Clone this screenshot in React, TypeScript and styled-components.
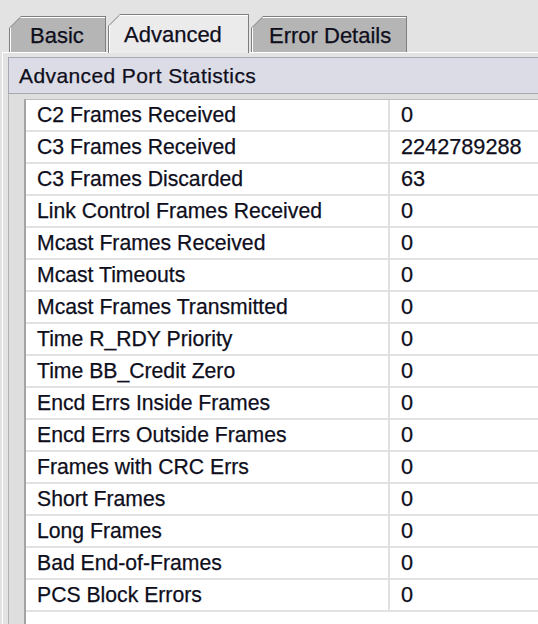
import styled, { createGlobalStyle } from 'styled-components';

const GlobalStyle = createGlobalStyle`
  body {
    margin: 0;
    background: #e3e3e3;
    font-family: "Liberation Sans", Arial, sans-serif;
  }
`;

const rows: [string, string][] = [
  ['C2 Frames Received', '0'],
  ['C3 Frames Received', '2242789288'],
  ['C3 Frames Discarded', '63'],
  ['Link Control Frames Received', '0'],
  ['Mcast Frames Received', '0'],
  ['Mcast Timeouts', '0'],
  ['Mcast Frames Transmitted', '0'],
  ['Time R_RDY Priority', '0'],
  ['Time BB_Credit Zero', '0'],
  ['Encd Errs Inside Frames', '0'],
  ['Encd Errs Outside Frames', '0'],
  ['Frames with CRC Errs', '0'],
  ['Short Frames', '0'],
  ['Long Frames', '0'],
  ['Bad End-of-Frames', '0'],
  ['PCS Block Errors', '0'],
];

const tabs = [
  { label: 'Basic', width: 97, pad: 21 },
  { label: 'Advanced', width: 141, pad: 16 },
  { label: 'Error Details', width: 156, pad: 18 },
];

const Screen = styled.div`
  width: 538px;
  height: 624px;
  overflow: hidden;
  display: flex;
  flex-direction: column;
  background: #e3e3e3;
  color: #0e0e1c;
  font-size: 21px;
  -webkit-text-stroke: 0.25px #0e0e1c;
`;

const TabStrip = styled.div`
  display: flex;
  align-items: flex-end;
  gap: 2px;
  height: 52px;
  padding-left: 9px;
  box-sizing: border-box;
  position: relative;
  z-index: 1;
`;

const Tab = styled.div<{ $active: boolean; $width: number }>`
  width: ${p => p.$width}px;
  height: ${p => (p.$active ? 39 : 36)}px;
  margin-bottom: ${p => (p.$active ? -1 : 0)}px;
  padding: 1px 1px 0 1px;
  box-sizing: border-box;
  background: #7e7e7e;
  clip-path: polygon(0 12px, 12px 0, 100% 0, 100% 100%, 0 100%);
`;

const TabFace = styled.div<{ $active: boolean; $pad: number }>`
  height: 100%;
  box-sizing: border-box;
  padding-left: ${p => p.$pad - 2}px;
  padding-top: ${p => (p.$active ? 5 : 4)}px;
  background: ${p => (p.$active ? '#ebebeb' : '#b5b5b5')};
  border-top: 1px solid #ffffff;
  border-left: 1px solid #ffffff;
  clip-path: polygon(0 11px, 11px 0, 100% 0, 100% 100%, 0 100%);
  font-size: 22px;
  line-height: 28px;
  white-space: nowrap;
`;

const Panel = styled.div`
  flex: 1;
  display: flex;
  flex-direction: column;
  margin-left: 2px;
  padding: 4px 0 0 5px;
  border-top: 1px solid #ffffff;
  border-left: 1px solid #ffffff;
  min-height: 0;
`;

const HeaderBand = styled.div`
  height: 35px;
  line-height: 35px;
  padding-left: 10px;
  border: 1px solid #a8a8b4;
  border-right: none;
  background: #dcdce6;
  letter-spacing: 0.4px;
  white-space: nowrap;
`;

const ScrollPane = styled.div`
  flex: 1;
  display: flex;
  padding: 5px 0 0 15px;
  border-left: 1px solid #b2b2b2;
  background: #dedede;
  min-height: 0;
`;

const Table = styled.div`
  flex: 1;
  min-width: 600px;
  background: #ffffff;
  border-left: 2px solid #a4a4a4;
  border-top: 1px solid #bdbdbd;
`;

const Row = styled.div`
  display: grid;
  grid-template-columns: 364px 1fr;
  height: 32px;
  box-sizing: border-box;
  border-bottom: 2px solid #e2e2e2;
`;

const Cell = styled.div<{ $label?: boolean }>`
  line-height: 30px;
  padding-left: ${p => (p.$label ? 11 : 11)}px;
  font-size: ${p => (p.$label ? 21.2 : 21.7)}px;
  border-right: ${p => (p.$label ? '2px solid #e0e0e0' : 'none')};
  white-space: nowrap;
`;

export default function App() {
  return (
    <>
      <GlobalStyle />
      <Screen>
        <TabStrip>
          {tabs.map(t => (
            <Tab key={t.label} $active={t.label === 'Advanced'} $width={t.width}>
              <TabFace $active={t.label === 'Advanced'} $pad={t.pad}>{t.label}</TabFace>
            </Tab>
          ))}
        </TabStrip>
        <Panel>
          <HeaderBand>Advanced Port Statistics</HeaderBand>
          <ScrollPane>
            <Table>
              {rows.map(([label, value]) => (
                <Row key={label}>
                  <Cell $label>{label}</Cell>
                  <Cell>{value}</Cell>
                </Row>
              ))}
            </Table>
          </ScrollPane>
        </Panel>
      </Screen>
    </>
  );
}
